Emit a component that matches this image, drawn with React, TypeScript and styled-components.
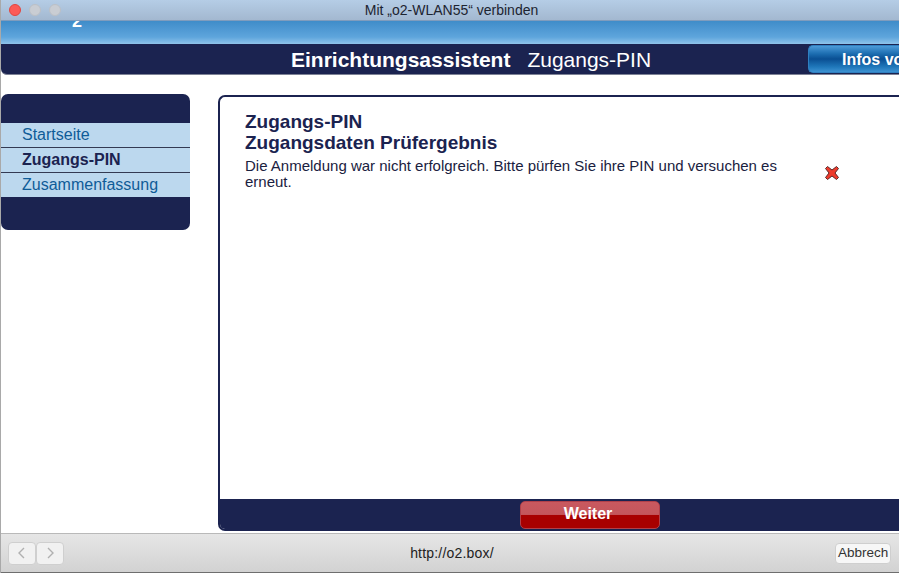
import React from 'react'
import styled, { createGlobalStyle } from 'styled-components'

const GlobalStyle = createGlobalStyle`
  html, body {
    margin: 0;
    padding: 0;
    background: #fff;
    overflow: hidden;
  }
  body {
    font-family: "Liberation Sans", Arial, sans-serif;
  }
`

const Window = styled.div`
  width: 899px;
  height: 573px;
  display: flex;
  flex-direction: column;
  overflow: hidden;
  background: #fff;
  box-sizing: border-box;
  border-left: 1px solid #a9a9a9;
`

const TitleBar = styled.div`
  height: 21px;
  flex: none;
  margin-left: -1px;
  display: flex;
  align-items: center;
  box-sizing: border-box;
  padding-left: 9px;
  gap: 8px;
  background: linear-gradient(#b5cde6, #a3b8d0);
  border-bottom: 1px solid #7f9cbd;
`

const Light = styled.span<{ $color: string; $edge: string }>`
  width: 12px;
  height: 12px;
  border-radius: 50%;
  box-sizing: border-box;
  background: ${(p) => p.$color};
  border: 1px solid ${(p) => p.$edge};
`

const WindowTitle = styled.div`
  flex: 1;
  text-align: center;
  font-size: 14px;
  color: #1d2430;
  padding-right: 65px;
`

const BlueBand = styled.div`
  height: 23px;
  flex: none;
  overflow: hidden;
  background: linear-gradient(#3f8cc9, #5ea5dc 70%, #8fc3ea);
  padding-left: 71px;
`

const ClippedLogo = styled.div`
  color: #fff;
  font-size: 18px;
  font-weight: 700;
  line-height: 18px;
  margin-top: -9px;
`

const Header = styled.div`
  height: 31px;
  flex: none;
  display: flex;
  align-items: center;
  box-sizing: border-box;
  padding-left: 290px;
  background: #1b2350;
  border-bottom: 1px solid #7d8296;
  border-bottom-left-radius: 6px;
  color: #fff;
`

const HeaderTitle = styled.div`
  font-size: 21px;
  font-weight: 700;
  white-space: nowrap;
  margin-right: 17px;
  padding-top: 2px;
`

const HeaderSub = styled.div`
  font-size: 21px;
  white-space: nowrap;
  padding-top: 2px;
`

const InfoButton = styled.div`
  margin-left: auto;
  flex: none;
  width: 91px;
  height: 28px;
  box-sizing: border-box;
  padding-left: 33px;
  border-radius: 5px 0 0 5px;
  border: 1px solid #2f7fc0;
  border-right: none;
  background: linear-gradient(#4c9ad8 0%, #1c6db0 30%, #0a4f93 50%, #1f77ba 80%, #3d92d2 100%);
  font-size: 16px;
  font-weight: 700;
  line-height: 27px;
  white-space: nowrap;
`

const Body = styled.div`
  flex: 1;
  min-height: 0;
  display: flex;
  align-items: flex-start;
  padding-top: 19px;
  overflow: hidden;
`

const Sidebar = styled.nav`
  width: 189px;
  flex: none;
  height: 136px;
  box-sizing: border-box;
  padding: 29px 0 33px;
  border-radius: 7px;
  background: #1b2350;
  margin-right: 28px;
`

const NavItem = styled.div<{ $active?: boolean }>`
  height: 25px;
  box-sizing: border-box;
  padding-left: 21px;
  background: #bcd8ee;
  border-bottom: 1px solid #333a52;
  font-size: 16px;
  line-height: 23px;
  font-weight: ${(p) => (p.$active ? 700 : 400)};
  color: ${(p) => (p.$active ? '#1b2350' : '#0f5c98')};
  &:last-child {
    height: 24px;
    border-bottom: none;
  }
`

const Panel = styled.main`
  width: 760px;
  flex: none;
  height: 436px;
  margin-top: 1px;
  box-sizing: border-box;
  display: flex;
  flex-direction: column;
  border: 2px solid #1b2350;
  border-right: none;
  border-radius: 7px 0 0 7px;
  overflow: hidden;
`

const PanelContent = styled.div`
  flex: 1;
  padding: 14px 0 0 25px;
  color: #1b2350;
`

const Heading = styled.h2`
  margin: 0;
  font-size: 19px;
  line-height: 21px;
  font-weight: 700;
`

const MessageRow = styled.div`
  display: flex;
  align-items: flex-start;
  margin-top: 5px;
`

const Message = styled.p`
  margin: 0;
  width: 560px;
  font-size: 15px;
  line-height: 16px;
  color: #1a2140;
`

const ErrorIcon = styled.svg`
  width: 16px;
  height: 16px;
  margin: 7px 0 0 19px;
  flex: none;
`

const PanelFooter = styled.div`
  height: 30px;
  flex: none;
  background: #1b2350;
  box-sizing: border-box;
  padding: 2px 0 0 300px;
`

const NextButton = styled.div`
  width: 140px;
  height: 28px;
  box-sizing: border-box;
  border: 1px solid #b0404a;
  border-radius: 5px;
  background: linear-gradient(#c9595f 0%, #c4565c 48%, #a80000 50%, #a80000 100%);
  color: #fff;
  font-size: 16px;
  font-weight: 700;
  line-height: 24px;
  text-align: center;
  padding-right: 4px;
`

const Toolbar = styled.footer`
  height: 40px;
  flex: none;
  display: flex;
  align-items: center;
  box-sizing: border-box;
  padding: 0 8px;
  margin-left: -1px;
  background: linear-gradient(#e6e6e6, #d2d2d2);
  border-top: 1px solid #b9b9b9;
  border-bottom: 1px solid #6e6e6e;
`

const NavButtons = styled.div`
  display: flex;
  width: 56px;
  flex: none;
`

const ArrowButton = styled.div`
  width: 28px;
  height: 23px;
  box-sizing: border-box;
  display: flex;
  align-items: center;
  justify-content: center;
  background: #f1f1f1;
  border: 1px solid #cfcfcf;
  border-radius: 4px;
  color: #b0b0b0;
`

const Url = styled.div`
  flex: 1;
  text-align: center;
  font-size: 14px;
  letter-spacing: 0.2px;
  color: #222;
  padding-left: 5px;
`

const CancelButton = styled.div`
  width: 56px;
  height: 21px;
  box-sizing: border-box;
  background: #f7f7f7;
  border: 1px solid #cfcfcf;
  border-radius: 4px;
  font-size: 13.5px;
  line-height: 18px;
  padding-left: 2px;
  color: #333;
  white-space: nowrap;
`

function Chevron({ points }: { points: string }) {
  return (
    <svg width="10" height="14" viewBox="0 0 10 14" fill="none" stroke="currentColor" strokeWidth="1.4">
      <polyline points={points} />
    </svg>
  )
}

export default function App() {
  return (
    <>
      <GlobalStyle />
      <Window>
        <TitleBar>
          <Light $color="#fc5b57" $edge="#e2463f" />
          <Light $color="#c9cdd3" $edge="#bcc0c6" />
          <Light $color="#c9cdd3" $edge="#bcc0c6" />
          <WindowTitle>Mit „o2-WLAN55“ verbinden</WindowTitle>
        </TitleBar>
        <BlueBand>
          <ClippedLogo>2</ClippedLogo>
        </BlueBand>
        <Header>
          <HeaderTitle>Einrichtungsassistent</HeaderTitle>
          <HeaderSub>Zugangs-PIN</HeaderSub>
          <InfoButton>Infos vo</InfoButton>
        </Header>
        <Body>
          <Sidebar>
            <NavItem>Startseite</NavItem>
            <NavItem $active>Zugangs-PIN</NavItem>
            <NavItem>Zusammenfassung</NavItem>
          </Sidebar>
          <Panel>
            <PanelContent>
              <Heading>Zugangs-PIN</Heading>
              <Heading>Zugangsdaten Prüfergebnis</Heading>
              <MessageRow>
                <Message>Die Anmeldung war nicht erfolgreich. Bitte pürfen Sie ihre PIN und versuchen es erneut.</Message>
                <ErrorIcon viewBox="0 0 16 16">
                  <path
                    d="M3.5 1.5 L8 5 L12.5 1.5 L14.5 3.5 L11 8 L14.500 12.5 L12.5 14.5 L8 11 L3.5 14.5 L1.5 12.5 L5 8 L1.5 3.5 Z"
                    fill="#ee3b2c"
                    stroke="#5a2a2a"
                    strokeWidth="1"
                    strokeLinejoin="round"
                  />
                </ErrorIcon>
              </MessageRow>
            </PanelContent>
            <PanelFooter>
              <NextButton>Weiter</NextButton>
            </PanelFooter>
          </Panel>
        </Body>
        <Toolbar>
          <NavButtons>
            <ArrowButton>
              <Chevron points="7,2 2,7 7,12" />
            </ArrowButton>
            <ArrowButton>
              <Chevron points="3,2 8,7 3,12" />
            </ArrowButton>
          </NavButtons>
          <Url>http://o2.box/</Url>
          <CancelButton>Abbrech</CancelButton>
        </Toolbar>
      </Window>
    </>
  )
}
